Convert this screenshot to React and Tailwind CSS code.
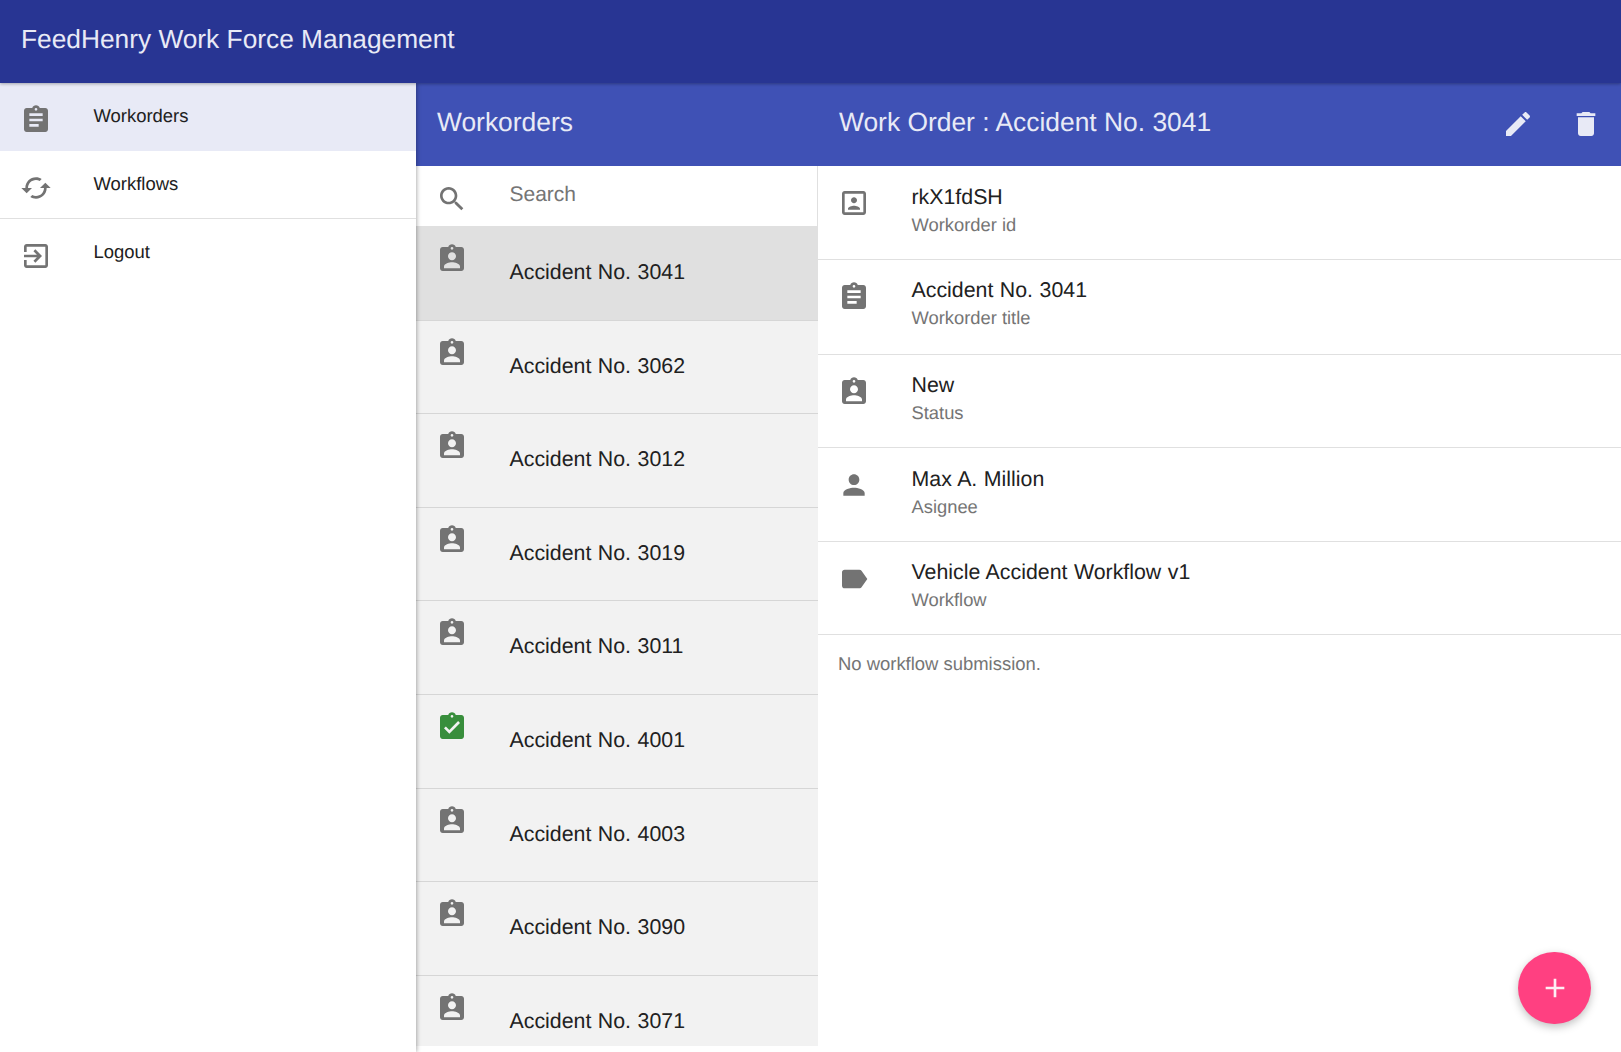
import React from 'react';

const paths = {
    assignment: 'M19 3h-4.18C14.4 1.84 13.3 1 12 1c-1.3 0-2.4.84-2.82 2H5c-1.1 0-2 .9-2 2v14c0 1.1.9 2 2 2h14c1.1 0 2-.9 2-2V5c0-1.1-.9-2-2-2zm-7 0c.55 0 1 .45 1 1s-.45 1-1 1-1-.45-1-1 .45-1 1-1zm2 14H7v-2h7v2zm3-4H7v-2h10v2zm0-4H7V7h10v2z',
    assignmentInd: 'M19 3h-4.18C14.4 1.84 13.3 1 12 1c-1.3 0-2.4.84-2.82 2H5c-1.1 0-2 .9-2 2v14c0 1.1.9 2 2 2h14c1.1 0 2-.9 2-2V5c0-1.1-.9-2-2-2zm-7 0c.55 0 1 .45 1 1s-.45 1-1 1-1-.45-1-1 .45-1 1-1zm0 4c1.66 0 3 1.34 3 3s-1.34 3-3 3-3-1.34-3-3 1.34-3 3-3zm6 12H6v-1.4c0-2 4-3.1 6-3.1s6 1.1 6 3.1V19z',
    assignmentDone: 'M19 3h-4.18C14.4 1.84 13.3 1 12 1c-1.3 0-2.4.84-2.82 2H5c-1.1 0-2 .9-2 2v14c0 1.1.9 2 2 2h14c1.1 0 2-.9 2-2V5c0-1.1-.9-2-2-2zm-7 0c.55 0 1 .45 1 1s-.45 1-1 1-1-.45-1-1 .45-1 1-1zm-2 14l-4-4 1.41-1.41L10 14.17l6.59-6.59L18 9l-8 8z',
    portrait: 'M12 12.25c1.24 0 2.25-1.01 2.25-2.25S13.24 7.75 12 7.75 9.75 8.76 9.75 10s1.01 2.25 2.25 2.25zm4.5 4c0-1.5-3-2.25-4.5-2.25s-4.5.75-4.5 2.25V17h9v-.75zM19 3H5c-1.1 0-2 .9-2 2v14c0 1.1.9 2 2 2h14c1.1 0 2-.9 2-2V5c0-1.1-.9-2-2-2zm0 16H5V5h14v14z',
    person: 'M12 12c2.21 0 4-1.79 4-4s-1.79-4-4-4-4 1.79-4 4 1.79 4 4 4zm0 2c-2.67 0-8 1.34-8 4v2h16v-2c0-2.66-5.33-4-8-4z',
    label: 'M17.63 5.84C17.27 5.33 16.67 5 16 5L5 5.01C3.9 5.01 3 5.9 3 7v10c0 1.1.9 1.99 2 1.99L16 19c.67 0 1.27-.33 1.63-.84L22 12l-4.37-6.16z',
    exit: 'M10.09 15.59L11.5 17l5-5-5-5-1.41 1.41L12.67 11H3v2h9.67l-2.58 2.59zM19 3H5c-1.11 0-2 .9-2 2v4h2V5h14v14H5v-4H3v4c0 1.1.89 2 2 2h14c1.1 0 2-.9 2-2V5c0-1.1-.9-2-2-2z',
    cached: 'M19 8l-4 4h3c0 3.31-2.69 6-6 6-1.01 0-1.97-.25-2.8-.7l-1.46 1.46C8.97 19.54 10.43 20 12 20c4.42 0 8-3.58 8-8h3l-4-4zM6 12c0-3.31 2.69-6 6-6 1.01 0 1.97.25 2.8.7l1.46-1.46C15.03 4.46 13.57 4 12 4c-4.42 0-8 3.58-8 8H1l4 4 4-4H6z',
    search: 'M15.5 14h-.79l-.28-.27C15.41 12.59 16 11.11 16 9.5 16 5.91 13.09 3 9.5 3S3 5.91 3 9.5 5.91 16 9.5 16c1.61 0 3.09-.59 4.23-1.57l.27.28v.79l5 4.99L20.49 19l-4.99-5zm-6 0C7.01 14 5 11.99 5 9.5S7.01 5 9.5 5 14 7.01 14 9.5 11.99 14 9.5 14z',
    edit: 'M3 17.25V21h3.75L17.81 9.94l-3.75-3.75L3 17.25zM20.71 7.04c.39-.39.39-1.02 0-1.41l-2.34-2.34c-.39-.39-1.02-.39-1.41 0l-1.83 1.83 3.75 3.75 1.83-1.83z',
    trash: 'M6 19c0 1.1.9 2 2 2h8c1.1 0 2-.9 2-2V7H6v12zM19 4h-3.5l-1-1h-5l-1 1H5v2h14V4z',
    add: 'M19 13h-6v6h-2v-6H5v-2h6V5h2v6h6v2z',
};

const Icon = ({ name, className = 'fill-[#737373]' }) => (
    <svg viewBox="0 0 24 24" className={`w-8 h-8 shrink-0 ${className}`}>
        <path d={paths[name]} />
    </svg>
);

const menu = [
    { icon: 'assignment', label: 'Workorders', active: true },
    { icon: 'cached', label: 'Workflows', border: true },
    { icon: 'exit', label: 'Logout' },
];

const workorders = [
    { title: 'Accident No. 3041', selected: true },
    { title: 'Accident No. 3062' },
    { title: 'Accident No. 3012' },
    { title: 'Accident No. 3019' },
    { title: 'Accident No. 3011' },
    { title: 'Accident No. 4001', done: true },
    { title: 'Accident No. 4003' },
    { title: 'Accident No. 3090' },
    { title: 'Accident No. 3071' },
];

const details = [
    { icon: 'portrait', value: 'rkX1fdSH', label: 'Workorder id', height: 'h-[94px]', shift: '-mt-[2px]' },
    { icon: 'assignment', value: 'Accident No. 3041', label: 'Workorder title', height: 'h-[95px]', shift: '-mt-[3px]' },
    { icon: 'assignmentInd', value: 'New', label: 'Status', height: 'h-[93px]', shift: '-mt-[3px]' },
    { icon: 'person', value: 'Max A. Million', label: 'Asignee', height: 'h-[94px]', shift: '-mt-[2px]' },
    { icon: 'label', value: 'Vehicle Accident Workflow v1', label: 'Workflow', height: 'h-[93px]', shift: '-mt-[3px]' },
];

export default function App() {
    return (
        <div className="relative h-[1052px] overflow-hidden bg-white flex flex-col [text-rendering:geometricPrecision] font-['Liberation_Sans',Arial,sans-serif] text-[#212121]">
            <header className="relative z-20 h-[83px] shrink-0 bg-[#283593] flex items-center pl-[21px] shadow-[0_1px_3px_rgba(0,0,0,0.3)]">
                <h1 className="text-[26.3px] text-[#e8eaf6] -mt-[3px]">FeedHenry Work Force Management</h1>
            </header>

            <div className="flex flex-1 min-h-0">
                <nav className="relative z-10 w-[416px] shrink-0 bg-white shadow-[1px_0_4px_rgba(0,0,0,0.3)]">
                    {menu.map((item) => (
                        <div
                            key={item.label}
                            className={`flex h-[68px] pl-5 pt-[21px] ${item.active ? 'bg-[#e8eaf6]' : ''} ${item.border ? 'border-b border-[#e0e0e0]' : ''}`}
                        >
                            <Icon name={item.icon} />
                            <span className="ml-[41.5px] mt-[1px] text-[18.45px] leading-[22px] h-[22px]">{item.label}</span>
                        </div>
                    ))}
                </nav>

                <main className="flex-1 min-w-0 flex flex-col">
                    <div className="h-[83px] shrink-0 bg-[#3f51b5] flex text-[#e8eaf6]">
                        <div className="w-[402px] pl-[21px] pt-[24px] text-[26.4px] leading-[30px]">Workorders</div>
                        <div className="flex-1 pl-[21px] pt-[24px] text-[26.4px] leading-[30px]">Work Order : Accident No. 3041</div>
                        <div className="flex pt-[25px] pr-[19px] gap-[36px]">
                            <Icon name="edit" className="fill-[#e8eaf6]" />
                            <Icon name="trash" className="fill-[#e8eaf6]" />
                        </div>
                    </div>

                    <div className="flex-1 min-h-0 flex">
                        <section className="w-[402px] shrink-0 flex flex-col pb-[6px]">
                            <div className="h-[60px] shrink-0 flex pl-[20px] pt-[17px] bg-white border-r border-[#e0e0e0]">
                                <Icon name="search" />
                                <span className="ml-[41.5px] text-[21px] leading-[24px] h-[24px] text-[#757575]">Search</span>
                            </div>
                            <div className="flex-1 min-h-0 overflow-hidden">
                                {workorders.map((order) => (
                                    <div
                                        key={order.title}
                                        className={`flex h-[93.6px] pl-[20px] pt-[16px] border-t ${order.selected ? 'border-transparent bg-[#e0e0e0]' : 'border-[#d6d6d6] bg-[#f2f2f2]'}`}
                                    >
                                        <Icon
                                            name={order.done ? 'assignmentDone' : 'assignmentInd'}
                                            className={order.done ? 'fill-[#388e3c]' : 'fill-[#737373]'}
                                        />
                                        <span className="ml-[41.5px] mt-[17px] text-[21.33px] [word-spacing:0.6px] leading-[24px] h-[24px]">{order.title}</span>
                                    </div>
                                ))}
                            </div>
                        </section>

                        <section className="flex-1 min-w-0">
                            {details.map((row) => (
                                <div key={row.label} className={`flex ${row.height} pl-[20px] pt-[21px] border-b border-[#e0e0e0]`}>
                                    <Icon name={row.icon} />
                                    <div className={`ml-[41.5px] ${row.shift}`}>
                                        <div className="text-[21.33px] [word-spacing:0.6px] leading-[24px]">{row.value}</div>
                                        <div className="mt-[4px] text-[18.35px] leading-[24px] text-[#757575]">{row.label}</div>
                                    </div>
                                </div>
                            ))}
                            <p className="pl-[20px] pt-[17px] text-[18.45px] leading-[24px] text-[#757575]">No workflow submission.</p>
                        </section>
                    </div>
                </main>
            </div>

            <button className="absolute z-30 left-[1518px] top-[952px] w-[73px] h-[72px] rounded-full bg-[#ff4081] flex items-center justify-center shadow-[0_3px_8px_rgba(0,0,0,0.25)]">
                <Icon name="add" className="fill-[#fdeef4]" />
            </button>
        </div>
    );
}
